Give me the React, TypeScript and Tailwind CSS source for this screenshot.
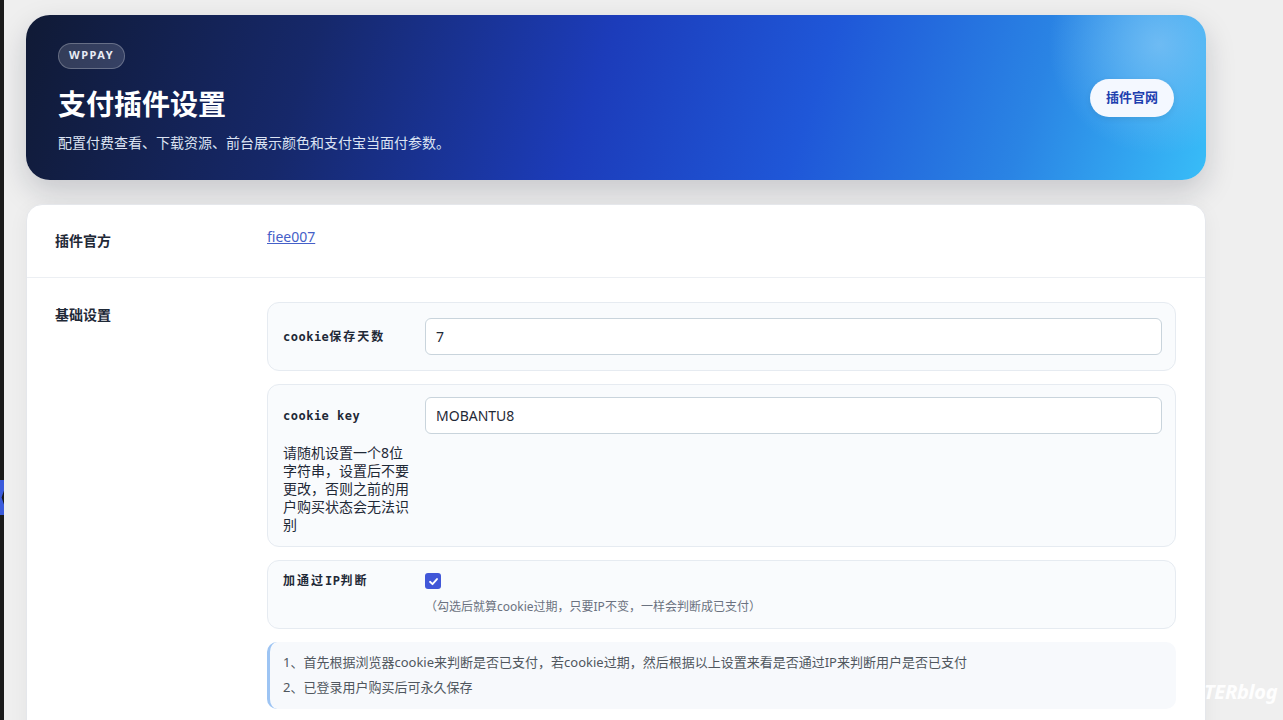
import React from "react";

const mono = "font-[family-name:'DejaVu_Sans_Mono','Noto_Sans_CJK_SC',monospace]";

function Label({ children, className = "" }: { children: React.ReactNode; className?: string }) {
  return (
    <div className={`${mono} text-[12px] font-bold tracking-[0.5px] text-[#1f2937] ${className}`}>{children}</div>
  );
}

function Cjk({ children }: { children: React.ReactNode }) {
  return <span className="tracking-[2px]">{children}</span>;
}

function Field({ value }: { value: string }) {
  return (
    <div className="flex h-[37px] flex-1 items-center rounded-[6px] border border-[#c9d4dc] bg-white px-[10px] text-[14px] text-[#1f2937]">
      {value}
    </div>
  );
}

export default function App() {
  return (
    <div className="relative flex h-[720px] w-[1283px] overflow-hidden bg-[#efefef] font-[family-name:'Noto_Sans','Noto_Sans_CJK_SC',sans-serif]">
      <div className="relative w-[4px] shrink-0 bg-[#1b1b1b]">
        <div className="absolute left-0 top-[480px] h-[35px] w-[4px] bg-[#3b5bdb] [clip-path:polygon(100%_0,100%_30%,40%_50%,100%_70%,100%_100%,0_100%,0_0)]" />
      </div>
      <main className="pl-[22px] pt-[15px]">
        <header className="flex h-[165px] w-[1180px] items-center justify-between rounded-[24px] bg-[radial-gradient(circle_at_96%_18%,rgba(130,195,245,0.75)_0px,rgba(130,195,245,0)_110px),linear-gradient(108deg,#101a35_0%,#16286a_24%,#1c3cba_48%,#1f57d8_66%,#2a84e4_84%,#38bdf8_100%)] px-[32px] shadow-[0_12px_30px_rgba(15,23,42,0.18)]">
          <div className="flex flex-col items-start">
            <div className="flex h-[26px] items-center rounded-full border border-white/25 bg-white/15 px-[10px] text-[11px] font-bold tracking-[1.5px] text-[#e8ecf5]">
              WPPAY
            </div>
            <h1 className="mt-[17px] text-[28px] font-bold leading-[36px] text-white">支付插件设置</h1>
            <p className="mt-[11px] text-[14px] leading-[20px] text-[#dbe3f3]">
              配置付费查看、下载资源、前台展示颜色和支付宝当面付参数。
            </p>
          </div>
          <div className="flex h-[38px] items-center rounded-full bg-[#f4f8ff] px-[16px] text-[13px] font-bold text-[#1e40af] shadow-[0_2px_6px_rgba(0,0,0,0.08)]">
            插件官网
          </div>
        </header>

        <section className="mt-[24px] w-[1180px] rounded-[16px] border border-[#e5e7eb] bg-white pb-[60px] shadow-[0_4px_20px_rgba(0,0,0,0.05)]">
          <div className="flex border-b border-[#eceff3] pb-[26px] pl-[28px] pr-[29px] pt-[22px]">
            <div className="mt-[4px] w-[212px] shrink-0 text-[14px] font-bold leading-[20px] text-[#1f2937]">插件官方</div>
            <a className="text-[14px] leading-[20px] text-[#4560c8] underline">fiee007</a>
          </div>

          <div className="flex pl-[28px] pr-[29px] pt-[24px]">
            <div className="mt-[3px] w-[212px] shrink-0 text-[14px] font-bold leading-[20px] text-[#1f2937]">基础设置</div>
            <div className="flex flex-1 flex-col gap-[13px]">
              <div className="flex gap-[12px] rounded-[12px] border border-[#e6ebf1] bg-[#f9fbfd] py-[15px] pl-[15px] pr-[13px]">
                <Label className="flex h-[37px] w-[130px] shrink-0 items-center">
                  cookie<Cjk>保存天数</Cjk>
                </Label>
                <Field value="7" />
              </div>

              <div className="flex items-start gap-[12px] rounded-[12px] border border-[#e6ebf1] bg-[#f9fbfd] py-[12px] pl-[15px] pr-[13px]">
                <div className="w-[130px] shrink-0">
                  <Label className="flex h-[37px] items-center">cookie key</Label>
                  <p className="mt-[10px] text-[14px] leading-[18px] text-[#1f2937]">
                    请随机设置一个8位字符串，设置后不要更改，否则之前的用户购买状态会无法识别
                  </p>
                </div>
                <Field value="MOBANTU8" />
              </div>

              <div className="flex items-start gap-[12px] rounded-[12px] border border-[#e6ebf1] bg-[#f9fbfd] py-[12px] pl-[15px] pr-[13px]">
                <Label className="flex h-[16px] w-[130px] shrink-0 items-center">
                  <Cjk>加通过</Cjk>IP<Cjk>判断</Cjk>
                </Label>
                <div className="flex flex-col">
                  <div className="flex h-[16px] w-[16px] items-center justify-center rounded-[3px] bg-[#4157d8]">
                    <svg width="11" height="11" viewBox="0 0 12 12" fill="none">
                      <path d="M2.2 6.3 L4.9 8.9 L9.8 3.3" stroke="white" strokeWidth="2" strokeLinecap="round" strokeLinejoin="round" />
                    </svg>
                  </div>
                  <p className="mt-[9px] text-[12px] leading-[18px] text-[#6b7280]">
                    （勾选后就算cookie过期，只要IP不变，一样会判断成已支付）
                  </p>
                </div>
              </div>

              <div className="rounded-[10px] border-l-[3px] border-[#9dc4f3] bg-[#f7f9fc] pb-[9px] pl-[13px] pt-[8px] text-[13px] leading-[25px] text-[#50575e]">
                <p>1、首先根据浏览器cookie来判断是否已支付，若cookie过期，然后根据以上设置来看是否通过IP来判断用户是否已支付</p>
                <p>2、已登录用户购买后可永久保存</p>
              </div>
            </div>
          </div>
        </section>
      </main>
      <div className="absolute left-[1204px] top-[677px] text-[20px] font-bold italic tracking-[-0.3px] text-white/95">
        TERblog
      </div>
    </div>
  );
}
